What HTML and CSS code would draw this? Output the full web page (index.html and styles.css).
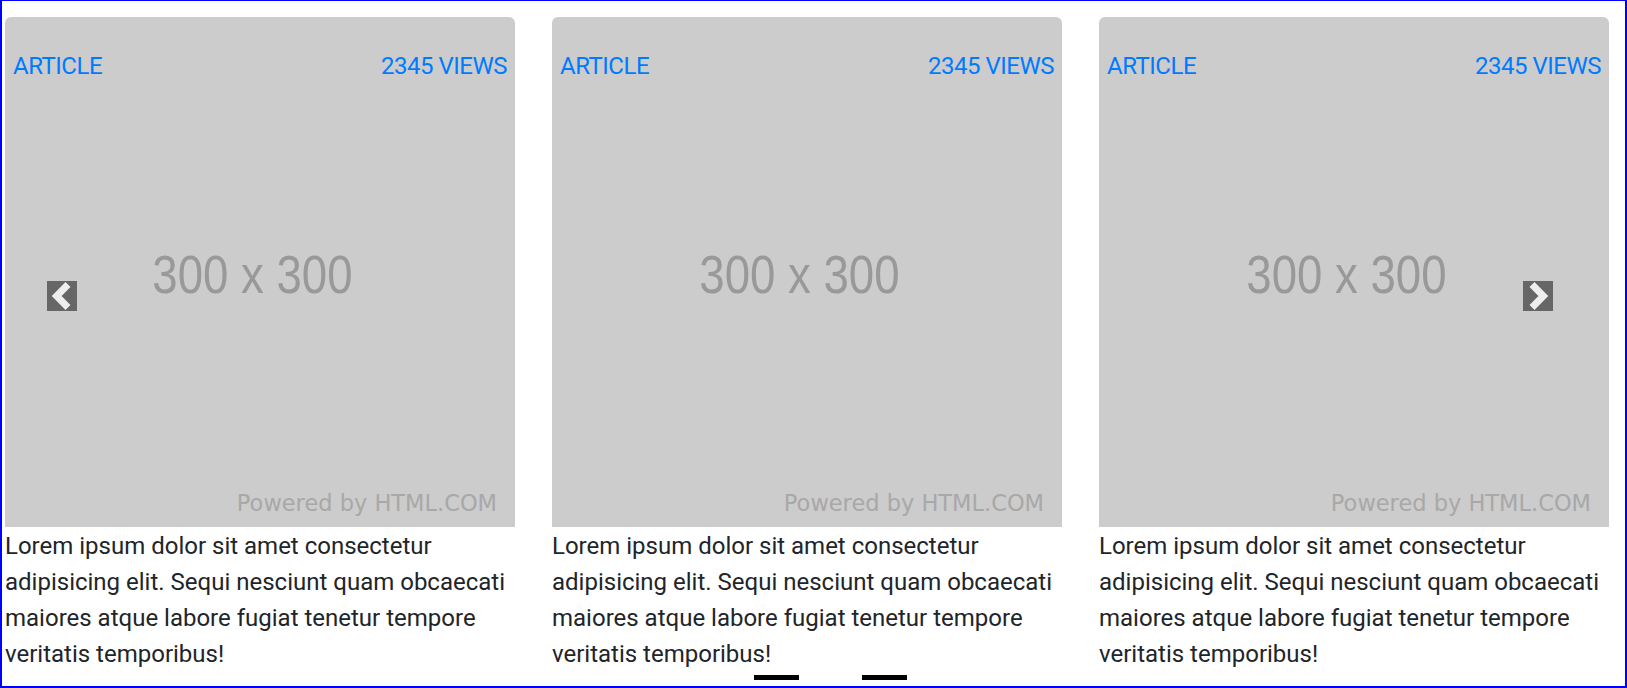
FILE: index.html
```html
<!DOCTYPE html>
<html>
<head>
<meta charset="utf-8">
<title>Card carousel</title>
<link rel="stylesheet" href="styles.css">
</head>
<body>
<div class="frame">
  <div class="carousel">
    <div class="cards">
      <div class="card">
        <div class="thumb">
          <div class="labels"><span>ARTICLE</span><span>2345 VIEWS</span></div>
          <span class="size">300 x 300</span>
          <span class="powered">Powered by HTML.COM</span>
        </div>
        <p class="card-text">Lorem ipsum dolor sit amet consectetur adipisicing elit. Sequi nesciunt quam obcaecati maiores atque labore fugiat tenetur tempore veritatis temporibus!</p>
      </div>
      <div class="card">
        <div class="thumb">
          <div class="labels"><span>ARTICLE</span><span>2345 VIEWS</span></div>
          <span class="size">300 x 300</span>
          <span class="powered">Powered by HTML.COM</span>
        </div>
        <p class="card-text">Lorem ipsum dolor sit amet consectetur adipisicing elit. Sequi nesciunt quam obcaecati maiores atque labore fugiat tenetur tempore veritatis temporibus!</p>
      </div>
      <div class="card">
        <div class="thumb">
          <div class="labels"><span>ARTICLE</span><span>2345 VIEWS</span></div>
          <span class="size">300 x 300</span>
          <span class="powered">Powered by HTML.COM</span>
        </div>
        <p class="card-text">Lorem ipsum dolor sit amet consectetur adipisicing elit. Sequi nesciunt quam obcaecati maiores atque labore fugiat tenetur tempore veritatis temporibus!</p>
      </div>
    </div>
    <a class="control control-prev" href="#" aria-label="Previous">
      <svg viewBox="0 0 30 30" width="30" height="30"><polyline points="21,3.5 9.65,15 21,26.5" /></svg>
    </a>
    <a class="control control-next" href="#" aria-label="Next">
      <svg viewBox="0 0 30 30" width="30" height="30"><polyline points="9,3.5 20.35,15 9,26.5" /></svg>
    </a>
    <ol class="indicators">
      <li></li>
      <li class="active"></li>
      <li></li>
    </ol>
  </div>
</div>
</body>
</html>
```
FILE: styles.css
```css
html, body {
  margin: 0;
  padding: 0;
  background: #fff;
}

.frame {
  width: 1627px;
  height: 688px;
  box-sizing: border-box;
  border: 2px solid #0000ff;
  border-top-width: 1px;
  padding: 16px 0 0 3px;
  overflow: hidden;
}

.carousel {
  position: relative;
  height: 100%;
}

.cards {
  display: flex;
  gap: 37px;
}

.card {
  width: 510px;
  flex: 0 0 510px;
}

.thumb {
  display: grid;
  width: 510px;
  height: 510px;
  background: #cccccc;
  border-radius: 6px 6px 0 0;
}

.thumb > * {
  grid-area: 1 / 1;
}

.labels {
  align-self: start;
  display: flex;
  justify-content: space-between;
  padding: 31px 8px 0 8px;
  font-family: Roboto, "Liberation Sans", sans-serif;
  font-size: 24px;
  line-height: 36px;
  letter-spacing: -0.5px;
  color: #007bff;
}

.size {
  align-self: center;
  justify-self: center;
  margin: 4px 16px 0 0;
  font-family: "Liberation Sans", Arial, sans-serif;
  font-size: 53px;
  line-height: 1;
  color: #999999;
  transform: scaleX(0.86);
}

.powered {
  align-self: end;
  justify-self: end;
  margin: 0 18px 13px 0;
  font-family: "DejaVu Sans", sans-serif;
  font-size: 22.5px;
  line-height: 1;
  color: #a8a8a8;
}

.card-text {
  margin: 1px 0 0 0;
  font-family: Roboto, "Liberation Sans", sans-serif;
  font-size: 24px;
  line-height: 36px;
  color: #212529;
}

.control {
  position: absolute;
  top: 264px;
  width: 30px;
  height: 30px;
  background: #666666;
  display: block;
}

.control svg {
  display: block;
}

.control polyline {
  fill: none;
  stroke: #eeeeee;
  stroke-width: 7;
  stroke-linecap: butt;
  stroke-linejoin: miter;
}

.control-prev {
  left: 42px;
}

.control-next {
  left: 1518px;
}

.indicators {
  position: absolute;
  left: 749px;
  top: 658px;
  display: flex;
  gap: 9px;
  margin: 0;
  padding: 0;
  list-style: none;
}

.indicators li {
  width: 45px;
  height: 5px;
  background: #000000;
}

.indicators li.active {
  background: #ffffff;
}
```
